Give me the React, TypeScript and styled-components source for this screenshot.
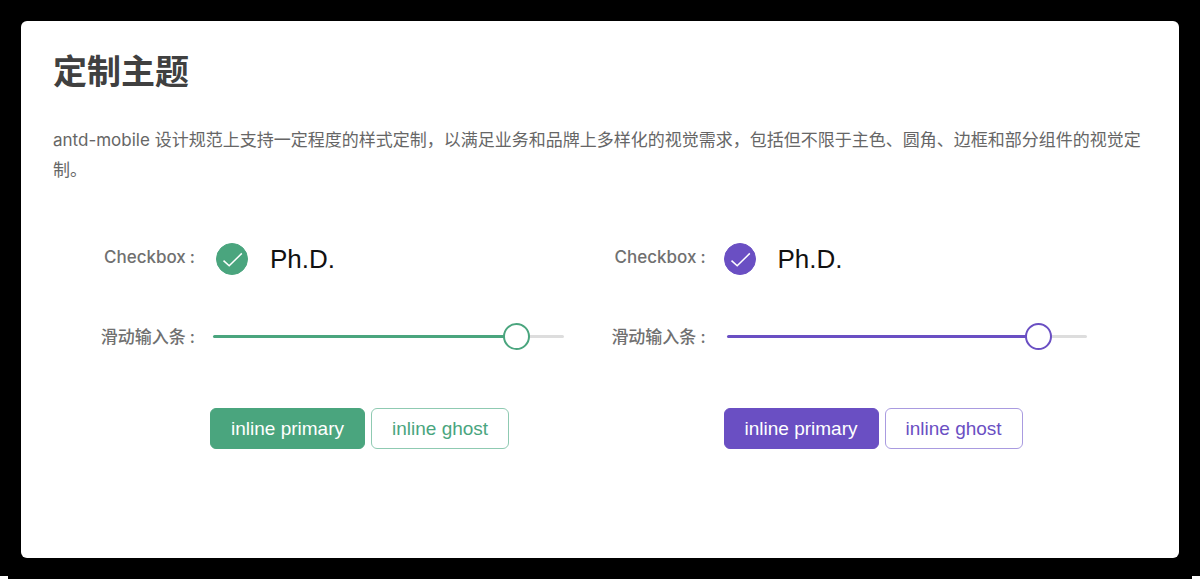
import React, { useId, useState } from "react";
import styled, { createGlobalStyle, ThemeProvider } from "styled-components";

const GlobalStyle = createGlobalStyle`
  *, *::before, *::after { box-sizing: border-box; }
  body {
    margin: 0;
    background: #fff;
    font-family: Inter, "Noto Sans CJK SC", sans-serif;
    color: #666;
  }
`;

const Backdrop = styled.div`
  padding: 21px 21px 18px;
  background: #000;
`;

const BackdropEdge = styled.div`
  height: 3px;
  margin: 0 8px;
  background: #000;
`;

const Card = styled.main`
  min-height: 537px;
  padding: 26px 32px 32px;
  border-radius: 6px;
  background: #fff;
`;

const Title = styled.h1`
  margin: 0 0 28px;
  font-size: 34px;
  line-height: 50px;
  font-weight: 700;
  color: #404040;
`;

const Description = styled.p`
  margin: 0;
  font-size: 17px;
  line-height: 30px;
`;

const Demos = styled.div`
  display: grid;
  grid-template-columns: 7fr 8fr;
  margin-top: 58px;
`;

const Panel = styled.section<{ $gap: number; $end: number }>`
  display: grid;
  grid-template-columns: 142px 1fr;
  grid-template-rows: 32px 27px 51px;
  row-gap: 48px;
  column-gap: ${(p) => p.$gap}px;
  align-items: center;
  padding-right: ${(p) => p.$end}px;
`;

const Label = styled.label`
  display: flex;
  align-self: start;
  justify-content: flex-end;
  gap: 4px;
  font-size: 17px;
  line-height: 28px;
  font-weight: 500;
  color: #707070;
`;

const CheckRow = styled.div<{ $inset: number }>`
  display: flex;
  align-items: center;
  gap: 22px;
  padding-left: ${(p) => p.$inset}px;
`;

const CheckMark = styled.span`
  display: grid;
  width: 32px;
  height: 32px;

  > * { grid-area: 1 / 1; }

  svg { pointer-events: none; }
`;

const CheckInput = styled.input`
  appearance: none;
  width: 32px;
  height: 32px;
  margin: 0;
  border: 1px solid ${(p) => p.theme.primary};
  border-radius: 50%;

  &:checked { background: ${(p) => p.theme.primary}; }
`;

const CheckText = styled.label`
  font-family: "Liberation Sans", sans-serif;
  font-size: 26px;
  line-height: 32px;
  color: #111;
`;

const SliderBox = styled.div`
  display: flex;
  padding-left: 3px;
`;

const Slider = styled.input<{ $value: number }>`
  appearance: none;
  width: 100%;
  height: 27px;
  margin: 0;
  background: transparent;

  &::-webkit-slider-runnable-track {
    height: 3px;
    border-radius: 2px;
    background: linear-gradient(
      to right,
      ${(p) => p.theme.primary} ${(p) => p.$value}%,
      #ddd ${(p) => p.$value}%
    );
  }

  &::-webkit-slider-thumb {
    appearance: none;
    width: 27px;
    height: 27px;
    margin-top: -12px;
    border: 2px solid ${(p) => p.theme.primary};
    border-radius: 50%;
    background: #fff;
  }
`;

const Buttons = styled.div`
  grid-column: 2;
  align-self: end;
  display: flex;
  gap: 6px;
`;

const Button = styled.button<{ $ghost?: boolean }>`
  height: 41px;
  padding: 0 20px;
  border: 1px solid ${(p) => (p.$ghost ? p.theme.outline : p.theme.primary)};
  border-radius: 6px;
  background: ${(p) => (p.$ghost ? "#fff" : p.theme.primary)};
  color: ${(p) => (p.$ghost ? p.theme.primary : "#fff")};
  font-family: "Liberation Sans", sans-serif;
  font-size: 19px;
  line-height: 24px;
  white-space: nowrap;
`;

const green = { primary: "#4aa57e", outline: "#8fcab2" };
const purple = { primary: "#6a4fc3", outline: "#a99be0" };

interface DemoProps {
  theme: { primary: string; outline: string };
  gap: number;
  inset: number;
  end: number;
}

function Demo({ theme, gap, inset, end }: DemoProps) {
  const id = useId();
  const [value, setValue] = useState(89.5);
  return (
    <ThemeProvider theme={theme}>
      <Panel $gap={gap} $end={end}>
        <Label htmlFor={`${id}-check`}>
          Checkbox<span>:</span>
        </Label>
        <CheckRow $inset={inset}>
          <CheckMark>
            <CheckInput id={`${id}-check`} type="checkbox" defaultChecked />
            <svg width="32" height="32" viewBox="0 0 32 32" fill="none" stroke="#fff" strokeWidth="1.5">
              <path d="M7.5 17.6 13.2 22.8 25.8 10.4" />
            </svg>
          </CheckMark>
          <CheckText htmlFor={`${id}-check`}>Ph.D.</CheckText>
        </CheckRow>

        <Label htmlFor={`${id}-slider`}>
          滑动输入条<span>:</span>
        </Label>
        <SliderBox>
          <Slider
            id={`${id}-slider`}
            type="range"
            min={0}
            max={100}
            step={0.5}
            value={value}
            $value={value}
            onChange={(e) => setValue(Number(e.target.value))}
          />
        </SliderBox>

        <Buttons>
          <Button type="button">inline primary</Button>
          <Button type="button" $ghost>
            inline ghost
          </Button>
        </Buttons>
      </Panel>
    </ThemeProvider>
  );
}

export default function App() {
  return (
    <>
      <GlobalStyle />
      <Backdrop>
        <Card>
          <Title>定制主题</Title>
          <Description>
            antd-mobile 设计规范上支持一定程度的样式定制，以满足业务和品牌上多样化的视觉需求，包括但不限于主色、圆角、边框和部分组件的视觉定制。
          </Description>
          <Demos>
            <Demo theme={green} gap={15} inset={6} end={0} />
            <Demo theme={purple} gap={18} inset={0} end={60} />
          </Demos>
        </Card>
      </Backdrop>
      <BackdropEdge />
    </>
  );
}
